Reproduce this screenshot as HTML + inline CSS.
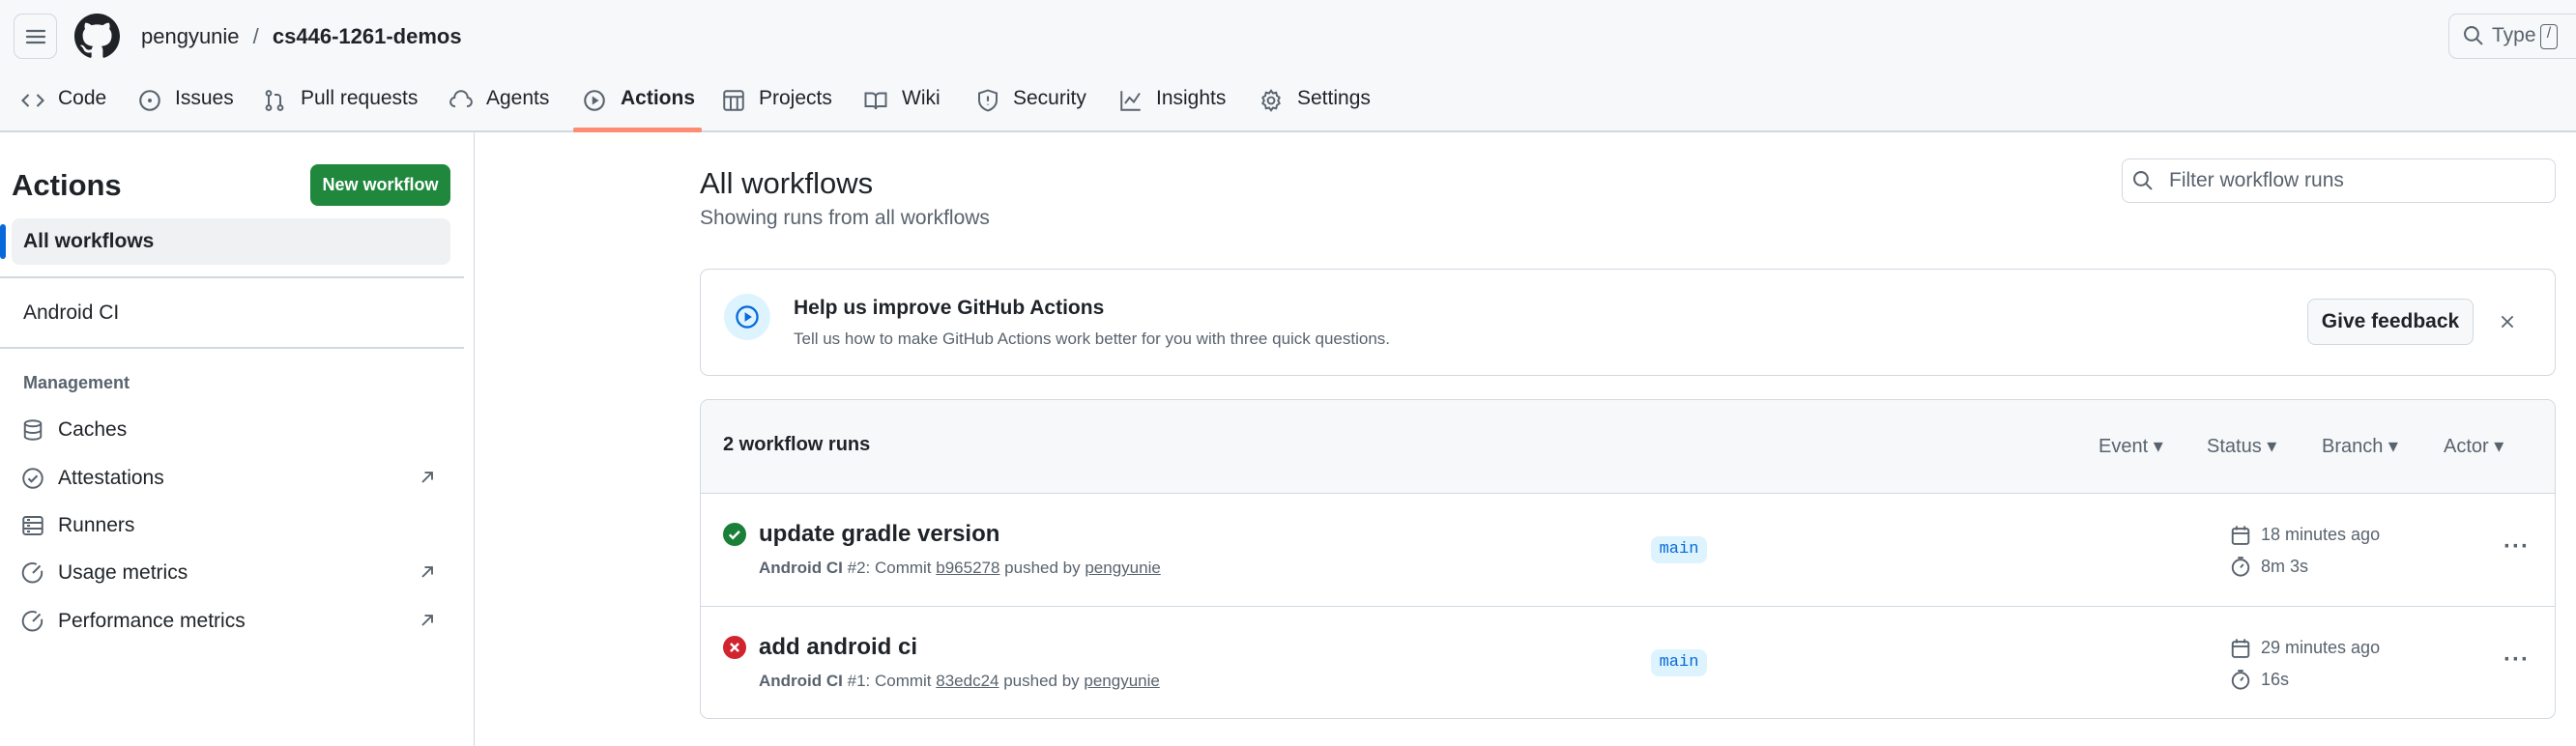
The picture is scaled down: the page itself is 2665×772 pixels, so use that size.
<!DOCTYPE html>
<html><head><meta charset="utf-8"><style>
*{box-sizing:border-box;margin:0;padding:0}
body{width:2665px;height:772px;overflow:hidden;background:#fff;font-family:"Liberation Sans",sans-serif;color:#1f2328;position:relative}
.a{position:absolute;white-space:nowrap}
svg{position:absolute}
.nav{font-size:21px;color:#1f2328;top:90px}
.sb{font-size:21px;left:60px}
.mut{color:#59636e}
</style></head><body>
<div class="a" style="left:0;top:0;width:2665px;height:137px;background:#f6f8fa;border-bottom:2px solid #d1d9e0"></div>
<div class="a" style="left:14px;top:14px;width:45px;height:47px;border:1px solid #d1d9e0;border-radius:9px;background:#f6f8fa"></div>
<svg style="left:25px;top:26px" width="24" height="24" viewBox="0 0 16 16"><path d="M2 4h12M2 8h12M2 12h12" stroke="#59636e" stroke-width="1.5" stroke-linecap="round"/></svg>
<svg style="left:77px;top:14px" width="47" height="47" viewBox="0 0 16 16"><path fill="#1f2328" d="M8 0C3.58 0 0 3.58 0 8c0 3.54 2.29 6.53 5.47 7.59.4.07.55-.17.55-.38 0-.19-.01-.82-.01-1.49-2.01.37-2.53-.49-2.69-.94-.09-.23-.48-.94-.82-1.13-.28-.15-.68-.52-.01-.53.63-.01 1.08.58 1.23.82.72 1.21 1.87.87 2.33.66.07-.52.28-.87.51-1.07-1.78-.2-3.64-.89-3.640-3.95 0-.87.31-1.59.82-2.15-.08-.2-.36-1.02.08-2.12 0 0 .67-.21 2.2.82.64-.18 1.32-.27 2-.27.68 0 1.36.09 2 .27 1.53-1.04 2.2-.82 2.2-.82.44 1.1.16 1.92.08 2.12.51.56.82 1.27.82 2.15 0 3.07-1.87 3.75-3.65 3.95.29.25.54.73.54 1.48 0 1.07-.01 1.93-.01 2.2 0 .21.15.46.55.38A8.013 8.013 0 0016 8c0-4.42-3.58-8-8-8z"/></svg>
<div class="a" style="left:146px;top:25px;font-size:22px">pengyunie <span style="color:#59636e;margin:0 8px">/</span> <b style="font-weight:600">cs446-1261-demos</b></div>
<div class="a" style="left:2533px;top:14px;width:140px;height:47px;border:1px solid #d1d9e0;border-radius:9px;background:#f6f8fa"></div>
<svg style="left:2548px;top:26px" width="22" height="22" viewBox="0 0 16 16"><circle cx="6.5" cy="6.5" r="5" fill="none" stroke="#59636e" stroke-width="1.5"/><path d="M10.5 10.5l4 4" stroke="#59636e" stroke-width="1.5"/></svg>
<div class="a mut" style="left:2578px;top:25px;font-size:21px">Type</div>
<div class="a" style="left:2628px;top:25px;width:18px;height:26px;border:1px solid #59636e;border-radius:4px;font-size:16px;text-align:center;color:#59636e">/</div>

<svg style="left:22px;top:92px" width="24" height="24" viewBox="0 0 16 16"><path d="M5 4L1 8l4 4M11 4l4 4-4 4" fill="none" stroke="#59636e" stroke-width="1.4"/></svg>
<div class="a nav" style="left:60px">Code</div>
<svg style="left:143px;top:92px" width="24" height="24" viewBox="0 0 16 16"><circle cx="8" cy="8" r="6.5" fill="none" stroke="#59636e" stroke-width="1.4"/><circle cx="8" cy="8" r="1.3" fill="#59636e"/></svg>
<div class="a nav" style="left:181px">Issues</div>
<svg style="left:272px;top:92px" width="24" height="24" viewBox="0 0 16 16"><g fill="none" stroke="#59636e" stroke-width="1.3"><circle cx="4" cy="3" r="1.6"/><circle cx="4" cy="13" r="1.6"/><circle cx="12" cy="13" r="1.6"/><path d="M4 4.6v6.8M12 11.4V6a2 2 0 00-2-2H8"/></g></svg>
<div class="a nav" style="left:311px">Pull requests</div>
<svg style="left:465px;top:92px" width="24" height="24" viewBox="0 0 16 16"><path d="M4 12a3 3 0 01-.5-6A4.5 4.5 0 0112.5 6a3 3 0 01-.5 6" fill="none" stroke="#59636e" stroke-width="1.3"/></svg>
<div class="a nav" style="left:503px">Agents</div>
<svg style="left:603px;top:92px" width="24" height="24" viewBox="0 0 16 16"><circle cx="8" cy="8" r="6.5" fill="none" stroke="#59636e" stroke-width="1.4"/><path d="M6.5 5v6l4.5-3z" fill="#59636e"/></svg>
<div class="a nav" style="left:642px;font-weight:600">Actions</div>
<div class="a" style="left:593px;top:132px;width:133px;height:5px;background:#fd8c73;border-radius:2px"></div>
<svg style="left:747px;top:92px" width="24" height="24" viewBox="0 0 16 16"><g fill="none" stroke="#59636e" stroke-width="1.3"><rect x="1.5" y="1.5" width="13" height="13" rx="1.5"/><path d="M1.5 5.5h13M6 5.5v9M10.5 5.5v9"/></g></svg>
<div class="a nav" style="left:785px">Projects</div>
<svg style="left:894px;top:92px" width="24" height="24" viewBox="0 0 16 16"><path d="M1 3h4.5A2.5 2.5 0 018 5.5V14a2 2 0 00-2-2H1zM15 3h-4.5A2.5 2.5 0 008 5.5V14a2 2 0 012-2h5z" fill="none" stroke="#59636e" stroke-width="1.3"/></svg>
<div class="a nav" style="left:933px">Wiki</div>
<svg style="left:1010px;top:92px" width="24" height="24" viewBox="0 0 16 16"><path d="M8 1l6 2v5c0 3.5-3 6-6 7-3-1-6-3.5-6-7V3z" fill="none" stroke="#59636e" stroke-width="1.3"/><path d="M8 5v3.5M8 10.5v.5" stroke="#59636e" stroke-width="1.4"/></svg>
<div class="a nav" style="left:1048px">Security</div>
<svg style="left:1158px;top:92px" width="24" height="24" viewBox="0 0 16 16"><path d="M1.5 1.5v13h13M4 10l3-4 3 3 4-6" fill="none" stroke="#59636e" stroke-width="1.3"/></svg>
<div class="a nav" style="left:1196px">Insights</div>
<svg style="left:1303px;top:92px" width="24" height="24" viewBox="0 0 16 16"><g fill="none" stroke="#59636e" stroke-width="1.3"><circle cx="8" cy="8" r="2.3"/><path d="M8 1.2l1.3 1.8 2.2-.5.5 2.2 1.8 1.3-1 2 1 2-1.8 1.3-.5 2.2-2.2-.5L8 14.8 6.7 13l-2.2.5-.5-2.2L2.2 10l1-2-1-2L4 4.7l.5-2.2 2.2.5z"/></g></svg>
<div class="a nav" style="left:1342px">Settings</div>

<!-- sidebar -->
<div class="a" style="left:490px;top:137px;width:1px;height:635px;background:#d1d9e0"></div>
<div class="a" style="left:12px;top:174px;font-size:31px;font-weight:600">Actions</div>
<div class="a" style="left:321px;top:170px;width:145px;height:43px;background:#1f883d;border-radius:8px;color:#fff;font-size:18px;font-weight:600;text-align:center;line-height:43px">New workflow</div>
<div class="a" style="left:12px;top:226px;width:454px;height:48px;background:#eff1f3;border-radius:8px"></div>
<div class="a" style="left:0;top:232px;width:6px;height:36px;background:#0969da;border-radius:3px"></div>
<div class="a sb" style="left:24px;top:238px;font-weight:600">All workflows</div>
<div class="a" style="left:0;top:286px;width:480px;height:2px;background:#d1d9e0"></div>
<div class="a sb" style="left:24px;top:312px">Android CI</div>
<div class="a" style="left:0;top:359px;width:480px;height:2px;background:#d1d9e0"></div>
<div class="a mut" style="left:24px;top:386px;font-size:18px;font-weight:600">Management</div>
<svg style="left:22px;top:433px" width="24" height="24" viewBox="0 0 16 16"><g fill="none" stroke="#59636e" stroke-width="1.3"><ellipse cx="8" cy="3.5" rx="5.5" ry="2"/><path d="M2.5 3.5v9c0 1.1 2.5 2 5.5 2s5.5-.9 5.5-2v-9M2.5 8c0 1.1 2.5 2 5.5 2s5.5-.9 5.5-2"/></g></svg>
<div class="a sb" style="top:433px">Caches</div>
<svg style="left:22px;top:483px" width="24" height="24" viewBox="0 0 16 16"><circle cx="8" cy="8" r="6.5" fill="none" stroke="#59636e" stroke-width="1.3"/><path d="M5 8.2l2 2 4-4" fill="none" stroke="#59636e" stroke-width="1.4"/></svg>
<div class="a sb" style="top:483px">Attestations</div>
<svg style="left:22px;top:532px" width="24" height="24" viewBox="0 0 16 16"><g fill="none" stroke="#59636e" stroke-width="1.3"><rect x="1.5" y="2" width="13" height="12" rx="1.5"/><path d="M1.5 6h13M1.5 10h13M4 4h2M4 8h2M4 12h2"/></g></svg>
<div class="a sb" style="top:532px">Runners</div>
<svg style="left:22px;top:581px" width="24" height="24" viewBox="0 0 16 16"><path d="M14 6.5A6.5 6.5 0 1110.5 2M8 8l5-5" fill="none" stroke="#59636e" stroke-width="1.3"/></svg>
<div class="a sb" style="top:581px">Usage metrics</div>
<svg style="left:22px;top:631px" width="24" height="24" viewBox="0 0 16 16"><path d="M14 6.5A6.5 6.5 0 1110.5 2M8 8l5-5" fill="none" stroke="#59636e" stroke-width="1.3"/></svg>
<div class="a sb" style="top:631px">Performance metrics</div>
<svg style="left:432px;top:484px" width="20" height="20" viewBox="0 0 16 16"><path d="M4 12l8-8M6 4h6v6" fill="none" stroke="#59636e" stroke-width="1.5"/></svg>
<svg style="left:432px;top:582px" width="20" height="20" viewBox="0 0 16 16"><path d="M4 12l8-8M6 4h6v6" fill="none" stroke="#59636e" stroke-width="1.5"/></svg>
<svg style="left:432px;top:632px" width="20" height="20" viewBox="0 0 16 16"><path d="M4 12l8-8M6 4h6v6" fill="none" stroke="#59636e" stroke-width="1.5"/></svg>

<!-- main -->
<div class="a" style="left:724px;top:172px;font-size:31px">All workflows</div>
<div class="a mut" style="left:724px;top:214px;font-size:21px">Showing runs from all workflows</div>
<div class="a" style="left:2195px;top:164px;width:449px;height:46px;border:1px solid #d1d9e0;border-radius:8px"></div>
<svg style="left:2206px;top:176px" width="22" height="22" viewBox="0 0 16 16"><circle cx="6.5" cy="6.5" r="5" fill="none" stroke="#59636e" stroke-width="1.5"/><path d="M10.5 10.5l4 4" stroke="#59636e" stroke-width="1.5"/></svg>
<div class="a mut" style="left:2244px;top:175px;font-size:21px">Filter workflow runs</div>

<div class="a" style="left:724px;top:278px;width:1920px;height:111px;border:1px solid #d1d9e0;border-radius:9px"></div>
<div class="a" style="left:749px;top:304px;width:48px;height:48px;border-radius:50%;background:#ddf4ff"></div>
<svg style="left:760px;top:315px" width="26" height="26" viewBox="0 0 16 16"><circle cx="8" cy="8" r="6.5" fill="none" stroke="#0969da" stroke-width="1.4"/><path d="M6.5 5v6l4.5-3z" fill="#0969da"/></svg>
<div class="a" style="left:821px;top:307px;font-size:21px;font-weight:600">Help us improve GitHub Actions</div>
<div class="a mut" style="left:821px;top:341px;font-size:17px">Tell us how to make GitHub Actions work better for you with three quick questions.</div>
<div class="a" style="left:2387px;top:309px;width:172px;height:48px;border:1px solid #d1d9e0;border-radius:8px;background:#f6f8fa;font-size:21px;font-weight:600;text-align:center;line-height:46px">Give feedback</div>
<svg style="left:2585px;top:324px" width="18" height="18" viewBox="0 0 16 16"><path d="M3 3l10 10M13 3L3 13" stroke="#59636e" stroke-width="1.6"/></svg>

<div class="a" style="left:724px;top:413px;width:1920px;height:331px;border:1px solid #d1d9e0;border-radius:9px;overflow:hidden">
 <div style="position:absolute;left:0;top:0;width:100%;height:97px;background:#f6f8fa;border-bottom:1px solid #d1d9e0"></div>
 <div style="position:absolute;left:0;top:213px;width:100%;height:1px;background:#d1d9e0"></div>
</div>
<div class="a" style="left:748px;top:449px;font-size:20px;font-weight:600">2 workflow runs</div>
<div class="a mut" style="left:2171px;top:449px;font-size:20px">Event ▾</div>
<div class="a mut" style="left:2283px;top:449px;font-size:20px">Status ▾</div>
<div class="a mut" style="left:2402px;top:449px;font-size:20px">Branch ▾</div>
<div class="a mut" style="left:2528px;top:449px;font-size:20px">Actor ▾</div>

<svg style="left:748px;top:541px" width="24" height="24" viewBox="0 0 16 16"><circle cx="8" cy="8" r="8" fill="#1a7f37"/><path d="M4.5 8.2l2.3 2.3 4.5-4.6" fill="none" stroke="#fff" stroke-width="1.6"/></svg>
<div class="a" style="left:785px;top:539px;font-size:24px;font-weight:600">update gradle version</div>
<div class="a mut" style="left:785px;top:578px;font-size:17px"><b style="font-weight:600">Android CI</b> #2: Commit <u>b965278</u> pushed by <u>pengyunie</u></div>
<div class="a" style="left:1708px;top:555px;width:58px;height:28px;background:#ddf4ff;border-radius:8px;color:#0969da;font-family:'Liberation Mono',monospace;font-size:17px;text-align:center;line-height:28px">main</div>
<svg style="left:2307px;top:542px" width="22" height="24" viewBox="0 0 16 16"><g fill="none" stroke="#59636e" stroke-width="1.4"><rect x="2" y="3" width="12" height="11.5" rx="1.5"/><path d="M2 6.5h12M5 1v3M11 1v3"/></g></svg>
<div class="a mut" style="left:2339px;top:543px;font-size:18px">18 minutes ago</div>
<svg style="left:2307px;top:574px" width="22" height="24" viewBox="0 0 16 16"><g fill="none" stroke="#59636e" stroke-width="1.4"><circle cx="8" cy="9" r="6"/><path d="M6 1.5h4M8 9l2-2.5"/></g></svg>
<div class="a mut" style="left:2339px;top:576px;font-size:18px">8m 3s</div>
<div class="a" style="left:2590px;top:552px;font-size:24px;color:#59636e;letter-spacing:1px;font-weight:bold">···</div>

<svg style="left:748px;top:658px" width="24" height="24" viewBox="0 0 16 16"><circle cx="8" cy="8" r="8" fill="#d1242f"/><path d="M5.3 5.3l5.4 5.4M10.7 5.3l-5.4 5.4" stroke="#fff" stroke-width="1.6"/></svg>
<div class="a" style="left:785px;top:656px;font-size:24px;font-weight:600">add android ci</div>
<div class="a mut" style="left:785px;top:695px;font-size:17px"><b style="font-weight:600">Android CI</b> #1: Commit <u>83edc24</u> pushed by <u>pengyunie</u></div>
<div class="a" style="left:1708px;top:672px;width:58px;height:28px;background:#ddf4ff;border-radius:8px;color:#0969da;font-family:'Liberation Mono',monospace;font-size:17px;text-align:center;line-height:28px">main</div>
<svg style="left:2307px;top:659px" width="22" height="24" viewBox="0 0 16 16"><g fill="none" stroke="#59636e" stroke-width="1.4"><rect x="2" y="3" width="12" height="11.5" rx="1.5"/><path d="M2 6.5h12M5 1v3M11 1v3"/></g></svg>
<div class="a mut" style="left:2339px;top:660px;font-size:18px">29 minutes ago</div>
<svg style="left:2307px;top:691px" width="22" height="24" viewBox="0 0 16 16"><g fill="none" stroke="#59636e" stroke-width="1.4"><circle cx="8" cy="9" r="6"/><path d="M6 1.5h4M8 9l2-2.5"/></g></svg>
<div class="a mut" style="left:2339px;top:693px;font-size:18px">16s</div>
<div class="a" style="left:2590px;top:669px;font-size:24px;color:#59636e;letter-spacing:1px;font-weight:bold">···</div>
</body></html>
